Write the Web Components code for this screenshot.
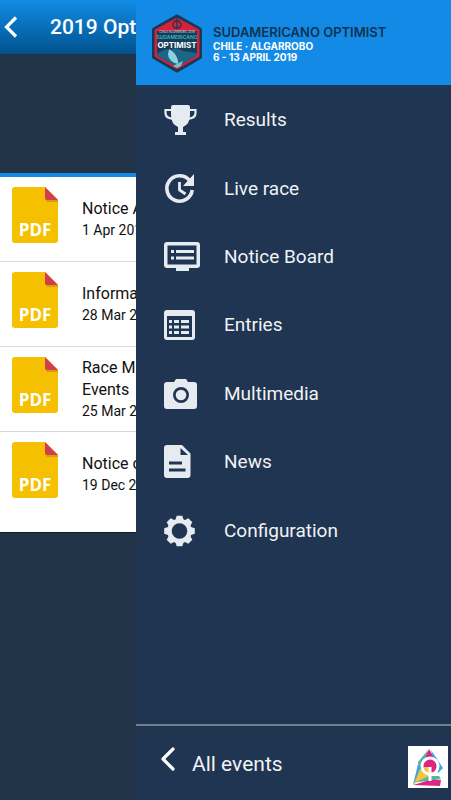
<!DOCTYPE html>
<html lang="en">
<head>
<meta charset="utf-8">
<meta name="viewport" content="width=device-width, initial-scale=1">
<title>Sudamericano Optimist</title>
<style>
html,body{height:100%;margin:0}
body{font-family:Roboto,"Noto Sans",sans-serif;background:#213347;overflow:hidden}
</style>
</head>
<body>
<event-app>
  <notice-page slot="page" heading="2019 Opt">
    <pdf-row heading="Notice A" date="1 Apr 201"></pdf-row>
    <pdf-row heading="Informa" date="28 Mar 2"></pdf-row>
    <pdf-row heading="Race M Events" date="25 Mar 2"></pdf-row>
    <pdf-row heading="Notice o" date="19 Dec 2"></pdf-row>
  </notice-page>
  <side-drawer slot="drawer">
    <event-banner slot="banner"></event-banner>
    <menu-item icon="trophy">Results</menu-item>
    <menu-item icon="clock">Live race</menu-item>
    <menu-item icon="board">Notice Board</menu-item>
    <menu-item icon="table">Entries</menu-item>
    <menu-item icon="camera">Multimedia</menu-item>
    <menu-item icon="doc">News</menu-item>
    <menu-item icon="gear">Configuration</menu-item>
    <drawer-footer slot="footer"></drawer-footer>
  </side-drawer>
</event-app>
<script>
const make = (name, html) => customElements.define(name, class extends HTMLElement {
  constructor() {
    super();
    this.attachShadow({mode: 'open'}).innerHTML = typeof html === 'function' ? html(this) : html;
  }
});

make('event-app', `
<style>
:host{display:block;position:relative;height:100%;overflow:hidden}
.drawer{position:absolute;top:0;right:0;bottom:0;left:136px}
</style>
<slot name="page"></slot>
<div class="drawer"><slot name="drawer"></slot></div>`);

make('notice-page', el => `
<style>
:host{display:block;height:100%;background:#213347}
header{display:flex;align-items:center;gap:24px;height:54px;box-sizing:border-box;padding:0 4px;background:linear-gradient(#118ce6,#00528d);color:#fff}
button{border:0;padding:0;background:none;display:flex}
h1{margin:0;font-size:21px;line-height:24px;font-weight:500;white-space:nowrap;padding-left:4px}
section{margin-top:119px;border-top:4px solid #138be6;background:#fff;padding-bottom:16px;border-bottom:1px solid #10191f}
</style>
<header>
  <button aria-label="Back"><svg width="18" height="24" viewBox="0 0 18 24"><path d="M12 2.500L2.500 12L12 21.500" fill="none" stroke="#fff" stroke-width="3.200"/></svg></button>
  <h1>${el.getAttribute('heading')}</h1>
</header>
<section><slot></slot></section>`);

make('pdf-row', el => `
<style>
:host{display:block;border-bottom:1px solid #d8d8d8}
:host(:last-child){border-bottom:0}
a{display:flex;align-items:center;gap:24px;height:84px;box-sizing:border-box;padding-left:12px;color:#111;text-decoration:none}
.file{position:relative;width:46px;height:56px;margin-bottom:8px}
svg{display:block}
.file span{position:absolute;left:0;right:0;bottom:3px;text-align:center;font:700 17px/20px "Open Sans","Noto Sans",sans-serif;color:#fff}
h2{margin:0;font-size:16px;line-height:22px;font-weight:400;width:64px}
h2.short{white-space:nowrap}
p{margin:0;font-size:14px;line-height:20px;white-space:nowrap}
</style>
<a href="#">
  <div class="file"><svg width="46" height="56" viewBox="0 0 46 56"><path d="M3 0H33L46 13V53a3 3 0 0 1-3 3H3a3 3 0 0 1-3-3V3a3 3 0 0 1 3-3z" fill="#f5c000"/><path d="M33 11.500L46 13v2H35z" fill="#d99d0c"/><path d="M33 0L46 13H35a2 2 0 0 1-2-2z" fill="#d13c4f"/></svg><span>PDF</span></div>
  <div><h2 class="${el.getAttribute('heading').length > 8 ? '' : 'short'}">${el.getAttribute('heading')}</h2><p>${el.getAttribute('date')}</p></div>
</a>`);

make('side-drawer', `
<style>
:host{display:flex;flex-direction:column;height:100%;background:#1f3551;color:#f0f2f5}
nav{display:grid;grid-auto-rows:1fr;height:479px}
footer{margin-top:auto}
</style>
<slot name="banner"></slot>
<nav><slot></slot></nav>
<footer><slot name="footer"></slot></footer>`);

make('event-banner', `
<style>
:host{display:flex;align-items:center;gap:9px;height:86px;box-sizing:border-box;padding:0 12px 0 14px;background:#138be6;border-bottom:1px solid #1a3c62;font-family:Inter,"Noto Sans",sans-serif;color:#fff}
svg{display:block;flex:none}
h2{margin:0;font-size:13px;line-height:18px;font-weight:600;color:#0f3350;white-space:nowrap}
p{margin:0;font-size:10px;line-height:11px;font-weight:700}
</style>
<svg width="54" height="60" viewBox="0 0 54 60" role="img" aria-label="Sudamericano Optimist">
  <path d="M27 3.500L50 16.500V44L27 57.500L4 44V16.500z" fill="#163a56" stroke="#163a56" stroke-width="4" stroke-linejoin="round"/>
  <path d="M27 5L49 17V43.500L27 56L5 43.500V17z" fill="#d8213b" stroke="#d8213b" stroke-linejoin="round"/>
  <path d="M7 18H47V42.500L27 54L7 42.500z" fill="#143e5b"/>
  <path d="M27 7L46 17H8z" fill="#d8213b"/>
  <path d="M7 41q8-6 13-4q6-4 13 1l14 2v2.500L27 54L7 42.500z" fill="#1c6587"/>
  <path d="M27 5v11M23 11l2-3h4l2 3v2l-2 2h-4l-2-2z" fill="none" stroke="#163a56" stroke-width="1.300"/>
  <path d="M19 36q9 5 9.500 15q-7-1-10-7q-1-3 .5-8z" fill="#8fd1dc"/>
  <path d="M23 53q6-3 10-5l-2 5-4 2z" fill="#79c2d0"/>
  <text x="27" y="20" font-size="3" text-anchor="middle" fill="#d5e3ea">CHILE ALGARROBO 2019</text>
  <text x="27" y="26" font-size="5" font-weight="600" text-anchor="middle" fill="#3fb6bd">SUDAMERICANO</text>
  <text x="27" y="35" font-size="8" font-weight="700" text-anchor="middle" fill="#fff">OPTIMIST</text>
</svg>
<div><h2>SUDAMERICANO OPTIMIST</h2><p>CHILE · ALGARROBO</p><p>6 - 13 APRIL 2019</p></div>`);

const icons = {
  trophy: '<path d="M7 4q0-2 2-2h15q2 0 2 2v8q0 9-7 12v5h3v3H11v-3h3v-5q-7-3-7-12z"/><path d="M7 7H1.500v3q0 5 6.500 5.600M26 7h5.500v3q0 5-6.500 5.600" fill="none" stroke="#e6ebf2" stroke-width="2.200"/>',
  clock: '<path d="M25.500 8.500A12.700 12.700 0 1 0 28.200 18" fill="none" stroke="#e6ebf2" stroke-width="3.600"/><path d="M30 2v12H19z"/><path d="M15.500 10v8l6 4" fill="none" stroke="#e6ebf2" stroke-width="2.800"/>',
  board: '<path fill-rule="evenodd" d="M3 2H33a3 3 0 0 1 3 3V25a3 3 0 0 1-3 3H25v3H12v-3H3a3 3 0 0 1-3-3V5a3 3 0 0 1 3-3zM3.500 5.500V24.500H32.500V5.500z"/><path d="M7 10h3v3H7zM12 10h18v3H12zM7 16.500h3v3H7zM12 16.500h18v3H12z"/>',
  table: '<path fill-rule="evenodd" d="M3 2H28a3 3 0 0 1 3 3V29a3 3 0 0 1-3 3H3a3 3 0 0 1-3-3V5a3 3 0 0 1 3-3zM3 8V29H28V8z"/><path d="M5 12h3v3H5zM10 12h5v3h-5zM17 12h8v3h-8zM5 17.500h3v3H5zM10 17.500h5v3h-5zM17 17.500h8v3h-8zM5 23h3v3H5zM10 23h5v3h-5zM17 23h8v3h-8z"/>',
  camera: '<path fill-rule="evenodd" d="M3 5h7l2-3h10l2 3h6a3 3 0 0 1 3 3v21a3 3 0 0 1-3 3H3a3 3 0 0 1-3-3V8a3 3 0 0 1 3-3zM17 10a8 8 0 1 0 0 16 8 8 0 0 0 0-16z"/><circle cx="17" cy="18" r="5.300"/>',
  doc: '<path fill-rule="evenodd" d="M3 0H18L26.500 8.500V30a3 3 0 0 1-3 3H3a3 3 0 0 1-3-3V3a3 3 0 0 1 3-3zM16.500 3v7h7.500zM5 16.500v3h13v-3zM5 23.500v3h16.500v-3z"/>',
  gear: '<g transform="translate(15.500 17)">' + [0,45,90,135,180,225,270,315].map(a => `<path transform="rotate(${a})" d="M-4.500-10L-2.800-15.300h5.600L4.500-10z"/>`).join('') + '<path fill-rule="evenodd" d="M0-12.200a12.200 12.200 0 1 0 0 24.400 12.200 12.200 0 0 0 0-24.400zM0-7.800a7.800 7.800 0 1 1 0 15.600 7.800 7.800 0 0 1 0-15.600z"/></g>'
};

make('menu-item', el => `
<style>
:host{display:block}
a{display:flex;align-items:center;gap:24px;height:100%;box-sizing:border-box;padding-left:28px;color:inherit;text-decoration:none;font-size:19px;line-height:24px}
svg{display:block;flex:none;overflow:visible;fill:#e6ebf2}
</style>
<a href="#"><svg width="36" height="34" viewBox="0 0 36 34" aria-hidden="true">${icons[el.getAttribute('icon')]}</svg><span><slot></slot></span></a>`);

make('drawer-footer', `
<style>
:host{display:flex;align-items:center;height:76px;box-sizing:border-box;padding:0 3px 0 24px;border-top:2px solid #6f7d8c}
a{display:flex;align-items:center;gap:16px;color:inherit;text-decoration:none;font-size:21px;line-height:26px;flex:1}
.back{margin-bottom:8px}
a span{padding-top:2px}
svg{display:block;flex:none}
.logo{margin-top:8px}
</style>
<a href="#"><svg class="back" width="16" height="24" viewBox="0 0 16 24" aria-hidden="true"><path d="M13 2L3 12L13 22" fill="none" stroke="#fff" stroke-width="3.200" stroke-linecap="round" stroke-linejoin="round"/></svg><span>All events</span></a>
<svg class="logo" width="40" height="42" viewBox="0 0 40 42" role="img" aria-label="Organiser">
  <path d="M0 0h40v42H0z" fill="#fff"/>
  <path d="M21 3L16 13h11z" fill="#dc267f"/>
  <path d="M20 4L10 16l1 12 6-14z" fill="#55b5a5"/>
  <path d="M23 4L35 22l-5 5-4-13z" fill="#3aa6de"/>
  <path d="M10 18L5 39l13-15z" fill="#41a6d9"/>
  <path d="M12 23l8 5v3L6 38z" fill="#f4c63e"/>
  <path d="M8 36l13-6h10l2 3-11 2z" fill="#58b59f"/>
  <path d="M5 39l17-5 11 0-1 6z" fill="#dc267f"/>
  <circle cx="22" cy="20" r="8" fill="#dc267f" stroke="#fff" stroke-width="3"/>
  <path d="M15.500 21h13q-1 5.500-6.500 5.500t-6.500-5.500z" fill="#f4c63e"/>
  <path d="M22 21h6.500q-1 5.500-6.500 5.500z" fill="#dc267f"/>
  <path d="M20.500 21h3v14h-3z" fill="#fff"/>
</svg>`);
</script>
</body>
</html>
